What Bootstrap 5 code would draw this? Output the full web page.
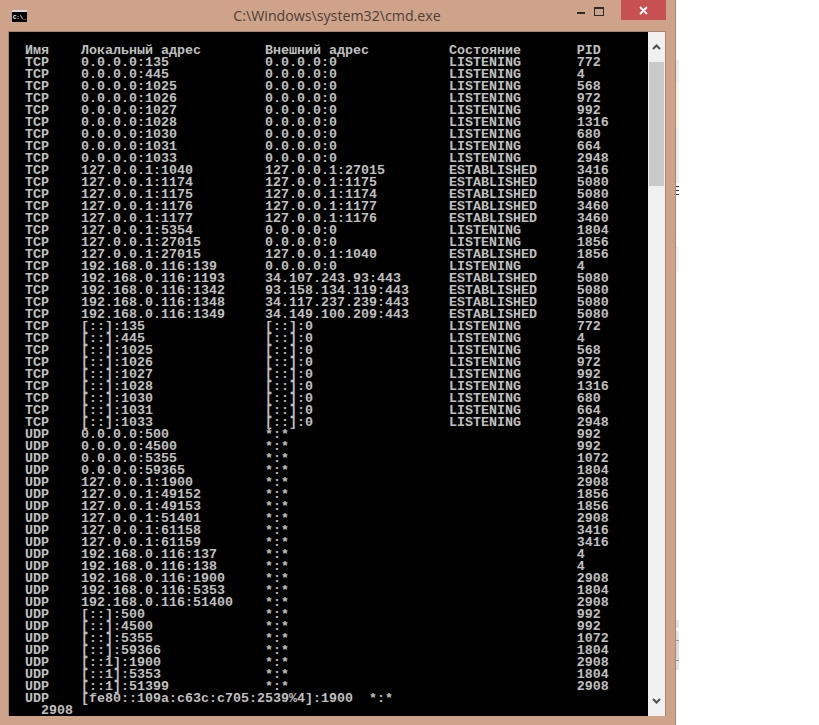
<!DOCTYPE html>
<html lang="ru">
<head>
<meta charset="utf-8">
<title>cmd.exe</title>
<link href="https://cdn.jsdelivr.net/npm/bootstrap@5.3.0/dist/css/bootstrap.min.css" rel="stylesheet">
<style>
html,body{height:725px;overflow:hidden;background:#fff}
.shot{height:725px}
.win{width:676px;height:725px;background:#cfa38a;border-right:1px solid #a88470}
.titlebar{height:31px;padding-left:12px}
.appicon{width:15px;height:12px;margin-top:10px;display:block}
.wintitle{left:0;right:0;top:5px;padding-right:1px;text-align:center;font:14.2px/22px "Open Sans","Noto Sans",sans-serif;color:#4b4038}
.ctl{height:20px}
.ctl-min{width:26px;padding:12px 0 0 9px}
.ctl-min i{display:block;width:8px;height:2px;background:#2b2b2b}
.ctl-max{width:18px;padding:7px 0 0 0}
.ctl-max i{display:block;width:10px;height:9px;border:1px solid #2b2b2b;border-top-width:2px}
.ctl-close{width:45px;margin-left:9px;margin-right:9px;background:#c75050}
.client{height:685px;margin-left:8px;margin-right:9px;border-left:1px solid #a88470;border-right:1px solid #a88470;border-top:1px solid #a88470;background:#000}
.console{flex:1;margin:0;padding:13px 0 0 16px;font:bold 13.33px/12px "Liberation Mono",monospace;color:#c0c0c0;background:#000;overflow:visible}
.sbar{width:17px;background:#f0f0f0}
.sarrow{height:30px}
.sthumb{height:124px;margin:0 1px;background:#c9c9c9}
.strip{width:3px;height:725px;background:linear-gradient(#fff 0 60px,#e9edf2 60px 82px,#f3f1e8 82px 128px,#e8eef6 128px 183px,#fff 183px 186px,#333 186px 187px,#fff 187px 190px,#333 190px 191px,#fff 191px 194px,#333 194px 195px,#fff 195px 206px,#fff 206px 246px,#eef3f8 246px 272px,#fff 272px 620px,#e4e4e4 620px 628px,#fff 628px 631px,#dfe6ef 631px 640px,#999 640px 641px,#ddd 641px 660px,#999 660px 661px,#dfe6ef 661px 670px,#fff 670px)}
</style>
</head>
<body class="m-0">
<div class="shot d-flex">
  <div class="win d-flex flex-column flex-shrink-0">
    <div class="titlebar d-flex justify-content-between position-relative">
      <svg class="appicon" viewBox="0 0 15 12" aria-hidden="true">
        <rect width="15" height="12" fill="#000"/>
        <rect x="0" y="0" width="15" height="2" fill="#d8d8d8"/>
        <text x="1" y="9" font-family="Liberation Mono, monospace" font-weight="bold" font-size="5.6" fill="#fff">C:\_</text>
      </svg>
      <div class="wintitle position-absolute">C:\Windows\system32\cmd.exe</div>
      <div class="d-flex align-items-start">
        <div class="ctl ctl-min"><i></i></div>
        <div class="ctl ctl-max"><i></i></div>
        <div class="ctl ctl-close d-flex align-items-center justify-content-center">
          <svg width="9" height="9" viewBox="0 0 9 9" aria-hidden="true"><path d="M1 1L8 8M8 1L1 8" stroke="#fff" stroke-width="1.8"/></svg>
        </div>
      </div>
    </div>
    <div class="client d-flex">
<pre class="console">Имя    Локальный адрес        Внешний адрес          Состояние       PID
TCP    0.0.0.0:135            0.0.0.0:0              LISTENING       772
TCP    0.0.0.0:445            0.0.0.0:0              LISTENING       4
TCP    0.0.0.0:1025           0.0.0.0:0              LISTENING       568
TCP    0.0.0.0:1026           0.0.0.0:0              LISTENING       972
TCP    0.0.0.0:1027           0.0.0.0:0              LISTENING       992
TCP    0.0.0.0:1028           0.0.0.0:0              LISTENING       1316
TCP    0.0.0.0:1030           0.0.0.0:0              LISTENING       680
TCP    0.0.0.0:1031           0.0.0.0:0              LISTENING       664
TCP    0.0.0.0:1033           0.0.0.0:0              LISTENING       2948
TCP    127.0.0.1:1040         127.0.0.1:27015        ESTABLISHED     3416
TCP    127.0.0.1:1174         127.0.0.1:1175         ESTABLISHED     5080
TCP    127.0.0.1:1175         127.0.0.1:1174         ESTABLISHED     5080
TCP    127.0.0.1:1176         127.0.0.1:1177         ESTABLISHED     3460
TCP    127.0.0.1:1177         127.0.0.1:1176         ESTABLISHED     3460
TCP    127.0.0.1:5354         0.0.0.0:0              LISTENING       1804
TCP    127.0.0.1:27015        0.0.0.0:0              LISTENING       1856
TCP    127.0.0.1:27015        127.0.0.1:1040         ESTABLISHED     1856
TCP    192.168.0.116:139      0.0.0.0:0              LISTENING       4
TCP    192.168.0.116:1193     34.107.243.93:443      ESTABLISHED     5080
TCP    192.168.0.116:1342     93.158.134.119:443     ESTABLISHED     5080
TCP    192.168.0.116:1348     34.117.237.239:443     ESTABLISHED     5080
TCP    192.168.0.116:1349     34.149.100.209:443     ESTABLISHED     5080
TCP    [::]:135               [::]:0                 LISTENING       772
TCP    [::]:445               [::]:0                 LISTENING       4
TCP    [::]:1025              [::]:0                 LISTENING       568
TCP    [::]:1026              [::]:0                 LISTENING       972
TCP    [::]:1027              [::]:0                 LISTENING       992
TCP    [::]:1028              [::]:0                 LISTENING       1316
TCP    [::]:1030              [::]:0                 LISTENING       680
TCP    [::]:1031              [::]:0                 LISTENING       664
TCP    [::]:1033              [::]:0                 LISTENING       2948
UDP    0.0.0.0:500            *:*                                    992
UDP    0.0.0.0:4500           *:*                                    992
UDP    0.0.0.0:5355           *:*                                    1072
UDP    0.0.0.0:59365          *:*                                    1804
UDP    127.0.0.1:1900         *:*                                    2908
UDP    127.0.0.1:49152        *:*                                    1856
UDP    127.0.0.1:49153        *:*                                    1856
UDP    127.0.0.1:51401        *:*                                    2908
UDP    127.0.0.1:61158        *:*                                    3416
UDP    127.0.0.1:61159        *:*                                    3416
UDP    192.168.0.116:137      *:*                                    4
UDP    192.168.0.116:138      *:*                                    4
UDP    192.168.0.116:1900     *:*                                    2908
UDP    192.168.0.116:5353     *:*                                    1804
UDP    192.168.0.116:51400    *:*                                    2908
UDP    [::]:500               *:*                                    992
UDP    [::]:4500              *:*                                    992
UDP    [::]:5355              *:*                                    1072
UDP    [::]:59366             *:*                                    1804
UDP    [::1]:1900             *:*                                    2908
UDP    [::1]:5353             *:*                                    1804
UDP    [::1]:51399            *:*                                    2908
UDP    [fe80::109a:c63c:c705:2539%4]:1900  *:*
  2908</pre>
      <div class="sbar d-flex flex-column flex-shrink-0">
        <div class="sarrow d-flex align-items-center justify-content-center">
          <svg width="9" height="6" viewBox="0 0 9 6" aria-hidden="true"><path d="M1 5L4.5 1.5L8 5" fill="none" stroke="#505050" stroke-width="2"/></svg>
        </div>
        <div class="sthumb"></div>
        <div class="flex-grow-1"></div>
        <div class="sarrow d-flex align-items-center justify-content-center">
          <svg width="9" height="6" viewBox="0 0 9 6" aria-hidden="true"><path d="M1 1L4.5 4.5L8 1" fill="none" stroke="#505050" stroke-width="2"/></svg>
        </div>
      </div>
    </div>
  </div>
  <div class="strip flex-shrink-0"></div>
</div>
<script src="https://cdn.jsdelivr.net/npm/bootstrap@5.3.0/dist/js/bootstrap.bundle.min.js"></script>
</body>
</html>
